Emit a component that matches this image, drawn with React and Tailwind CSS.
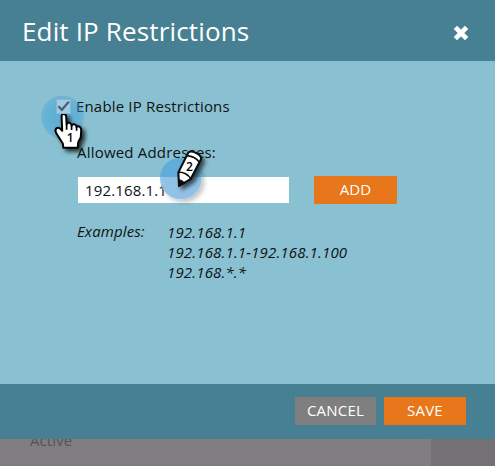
function HandMarker() {
  return (
    <svg className="absolute left-[36px] top-[90px]" width="60" height="68" viewBox="36 90 60 68">
      <defs>
        <filter id="handShadow" x="-40%" y="-40%" width="190%" height="190%">
          <feDropShadow dx="3" dy="3" stdDeviation="2.2" floodColor="#000" floodOpacity="0.75" />
        </filter>
        <radialGradient id="handGlow">
          <stop offset="0" stopColor="#2f97d8" stopOpacity="0.48" />
          <stop offset="0.8" stopColor="#3a9ed8" stopOpacity="0.44" />
          <stop offset="1" stopColor="#45a3d8" stopOpacity="0.36" />
        </radialGradient>
      </defs>
      <circle cx="62.5" cy="117" r="21.5" fill="url(#handGlow)" />
      <g filter="url(#handShadow)">
        <path
          d="M61.6 116.8C61.4 112.9 66.2 112.9 66.2 116.8L66.6 124.3C67.5 122 71.3 122.4 71.6 125.6C72.6 123.3 76.2 124 76.6 127C78.2 125.4 81.2 126.8 81.2 130L80.8 137.3L78.2 142.3L77.8 147.8H63.4L62.8 143.5L56.6 133.8C53.6 129.2 57.4 126 60 128.6L62.2 130.8Z"
          fill="#fff"
          stroke="#050505"
          strokeWidth="2"
          strokeLinejoin="round"
        />
        <path d="M66.6 124V129.7M71.6 125.5V130M76.6 127V130.8" stroke="#050505" strokeWidth="1.7" fill="none" />
      </g>
      <text x="66.8" y="141.7" fontSize="12" fill="#000" className="font-['Open_Sans',sans-serif] font-semibold">1</text>
    </svg>
  );
}

function PencilMarker() {
  return (
    <svg className="absolute left-[154px] top-[145px]" width="62" height="64" viewBox="154 145 62 64">
      <defs>
        <filter id="pencilShadow" x="-40%" y="-40%" width="190%" height="190%">
          <feDropShadow dx="3" dy="3" stdDeviation="2.2" floodColor="#000" floodOpacity="0.65" />
        </filter>
        <filter id="circleShadow" x="-30%" y="-30%" width="170%" height="170%">
          <feDropShadow dx="3" dy="3" stdDeviation="2" floodColor="#000" floodOpacity="0.25" />
        </filter>
        <clipPath id="overPanel">
          <rect x="154" y="145" width="62" height="32" />
        </clipPath>
      </defs>
      <g filter="url(#circleShadow)">
        <circle cx="180.8" cy="178.5" r="20.8" fill="#88bee6" fillOpacity="0.88" />
      </g>
      <circle cx="180.8" cy="178.5" r="20.8" fill="#4ba3d6" fillOpacity="0.65" clipPath="url(#overPanel)" />
      <g filter="url(#pencilShadow)">
        <path
          d="M179 186L178.4 172.4L188.2 152.8C190 148.8 202.3 154.6 201 159.2L190.8 178.8Z"
          fill="#fff"
          stroke="#080808"
          strokeWidth="2"
          strokeLinejoin="round"
        />
        <path d="M187 156C190.5 155.2 197.8 158.8 199.2 162.3M178.4 172.4C183 171.8 188.5 174.4 190.8 178.8" stroke="#080808" strokeWidth="1.6" fill="none" />
        <path d="M179 186.2L178.6 180C180.6 179.7 183 180.8 184.2 182.7Z" fill="#080808" stroke="#080808" />
      </g>
      <text x="186.1" y="171.3" fontSize="12" fill="#000" className="font-['Open_Sans',sans-serif] font-semibold">2</text>
    </svg>
  );
}

export default function App() {
  return (
    <div className="relative flex h-[466px] w-[495px] flex-col overflow-hidden bg-[#89c1d2] font-['Open_Sans','Noto_Sans',sans-serif] text-[15px] leading-5 text-[#111]">
      <header className="flex h-[61px] shrink-0 items-center justify-between bg-[#468092] pl-[22px] pr-[26px] text-white">
        <h1 className="text-[26px] leading-8 tracking-[0.15px] whitespace-nowrap">Edit IP Restrictions</h1>
        <button aria-label="Close" className="mt-1">
          <svg width="16" height="16" viewBox="0 0 16 16">
            <path d="M2.4 2.4L13.6 13.6M13.6 2.4L2.4 13.6" stroke="#fff" strokeWidth="4.8" />
          </svg>
        </button>
      </header>

      <main className="flex h-[323px] shrink-0 flex-col pl-[56px] pt-[35px]">
        <label className="flex h-5 items-center">
          <span className="relative z-10 mr-[6px] flex h-[15px] w-[15px] items-center justify-center border border-[#86b4d3] bg-[#a3cae3]">
            <svg width="13" height="13" viewBox="0 0 12 12" fill="none">
              <path d="M1.3 5.7L4.5 9L11 1.5" stroke="#3f637b" strokeWidth="2.1" />
            </svg>
          </span>
          <span className="-ml-px tracking-[0.17px] whitespace-nowrap">Enable IP Restrictions</span>
        </label>
        <div className="ml-[21px] mt-[26px] h-5 tracking-[0.2px]">Allowed Addresses:</div>
        <div className="ml-[22px] mt-[14px] flex h-7 items-center gap-[25px]">
          <div className="flex h-[26px] w-[211px] items-center bg-white pl-[7px] tracking-[0.15px]">192.168.1.1</div>
          <button className="h-7 w-[83px] bg-[#e8761a] pb-[2px] tracking-[0.15px] text-white">ADD</button>
        </div>
        <div className="ml-[21px] mt-[17px] flex italic">
          <div className="w-[90px] tracking-[0.12px]">Examples:</div>
          <div className="pt-px tracking-[0.17px] whitespace-nowrap">
            <div>192.168.1.1</div>
            <div>192.168.1.1-192.168.1.100</div>
            <div>192.168.*.*</div>
          </div>
        </div>
      </main>

      <footer className="flex h-[55px] shrink-0 justify-end gap-2 bg-[#468092] pr-[29px] pt-[13px] tracking-[0.2px] text-white">
        <button className="h-7 w-[81px] bg-[#7f7f7f] pb-[2px]">CANCEL</button>
        <button className="h-7 w-[82px] bg-[#e8761a] pb-[2px]">SAVE</button>
      </footer>

      <div className="flex h-[27px] shrink-0 overflow-hidden bg-[#807d80]">
        <div className="w-[431px] pl-[30px] text-[#555257]">
          <div className="-mt-[9px] tracking-[0.1px]">Active</div>
        </div>
        <div className="flex-1 bg-[#747174]" />
      </div>
      <div className="absolute inset-0 z-20 pointer-events-none">
        <PencilMarker />
      </div>
      <HandMarker />
    </div>
  );
}
